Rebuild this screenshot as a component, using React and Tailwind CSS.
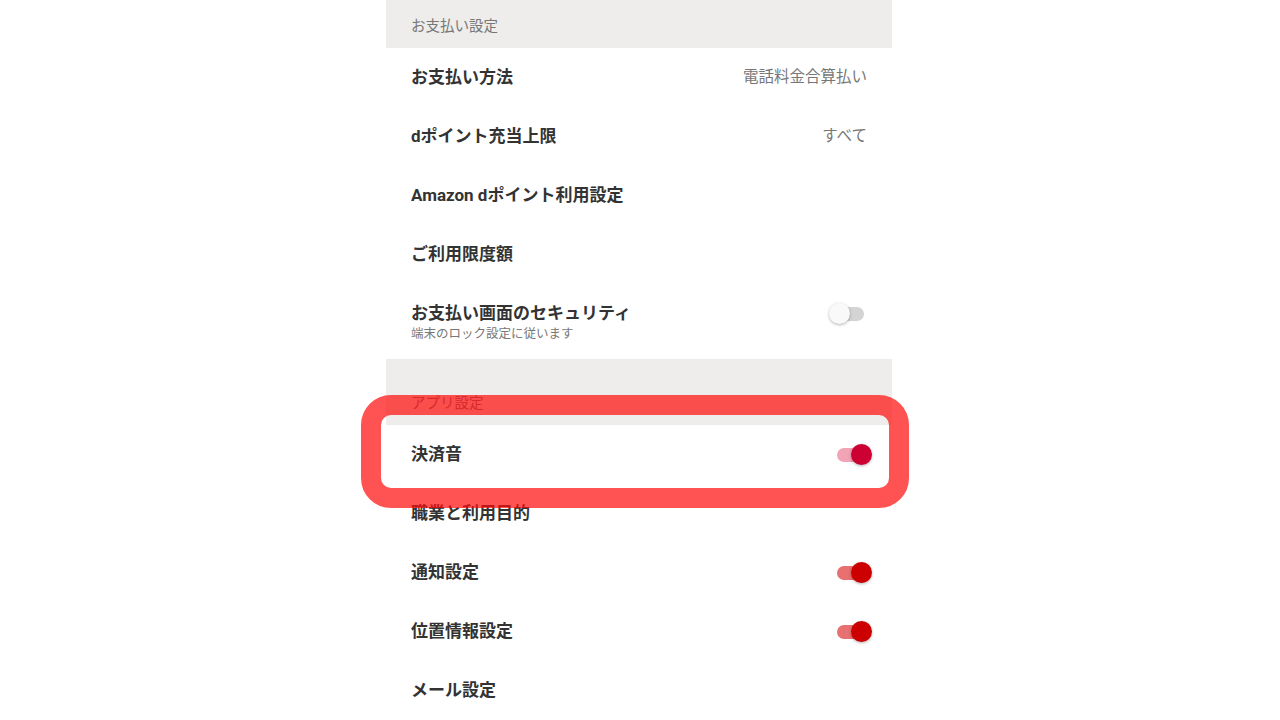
import React from "react";

const font = { fontFamily: 'Roboto, "Noto Sans CJK JP", "Noto Sans", sans-serif' };

function Toggle({ on, thumb = "bg-[#cc0000]", track = "bg-[#e87070]", className = "" }) {
  return (
    <div className={`relative h-[22px] w-[38px] ${className}`}>
      <div
        className={`absolute top-[4px] h-[14px] w-[32px] rounded-full ${
          on ? `${track} left-[3px]` : "bg-[#d4d4d4] left-[3px]"
        }`}
      />
      <div
        className={`absolute top-0 h-[21px] w-[21px] rounded-full shadow-[0_1px_3px_rgba(0,0,0,0.3)] ${
          on ? `${thumb} right-0` : "bg-[#f9f9f9] left-0"
        }`}
      />
    </div>
  );
}

function Row({ title, value, children }) {
  return (
    <div className="flex h-[59px] items-center justify-between pl-[25px] pr-[25px]">
      <span className="text-[17px] font-bold text-[#333333]">{title}</span>
      {value && <span className="text-[15.5px] text-[#777777]">{value}</span>}
      {children}
    </div>
  );
}

export default function App() {
  return (
    <div className="min-h-screen bg-white" style={font}>
      <div className="relative ml-[386px] w-[506px]">
        {/* お支払い設定 */}
        <div className="flex h-[48px] items-center bg-[#eeedeb] pl-[25px] pt-[5px] text-[14.5px] text-[#777777]">
          お支払い設定
        </div>
        <Row title="お支払い方法" value="電話料金合算払い" />
        <Row title="dポイント充当上限" value="すべて" />
        <Row title="Amazon dポイント利用設定" />
        <Row title="ご利用限度額" />
        <div className="flex h-[75px] items-start justify-between pl-[25px] pr-[25px] pt-[18px]">
          <div className="flex flex-col">
            <span className="text-[17px] font-bold leading-[22px] text-[#333333]">
              お支払い画面のセキュリティ
            </span>
            <span className="text-[12.5px] leading-[19px] text-[#777777]">
              端末のロック設定に従います
            </span>
          </div>
          <Toggle on={false} className="mr-0 mt-[1px]" />
        </div>

        {/* アプリ設定 */}
        <div className="flex h-[66px] items-end bg-[#eeedeb] pb-[10px] pl-[25px] text-[14.5px] text-[#777777]">
          アプリ設定
        </div>
        <Row title="決済音">
          <Toggle on thumb="bg-[#cc0033]" track="bg-[#f2a4b6]" className="mr-[-5px]" />
        </Row>
        <Row title="職業と利用目的" />
        <Row title="通知設定">
          <Toggle on className="mr-[-5px]" />
        </Row>
        <Row title="位置情報設定">
          <Toggle on className="mr-[-5px]" />
        </Row>
        <div className="border-b border-[#e6e6e6]">
          <Row title="メール設定" />
        </div>

        {/* highlight frame */}
        <div className="pointer-events-none absolute left-[-25px] top-[395px] h-[113px] w-[548px] rounded-[30px] border-[20px] border-[rgba(255,10,10,0.7)]" />
      </div>
    </div>
  );
}
